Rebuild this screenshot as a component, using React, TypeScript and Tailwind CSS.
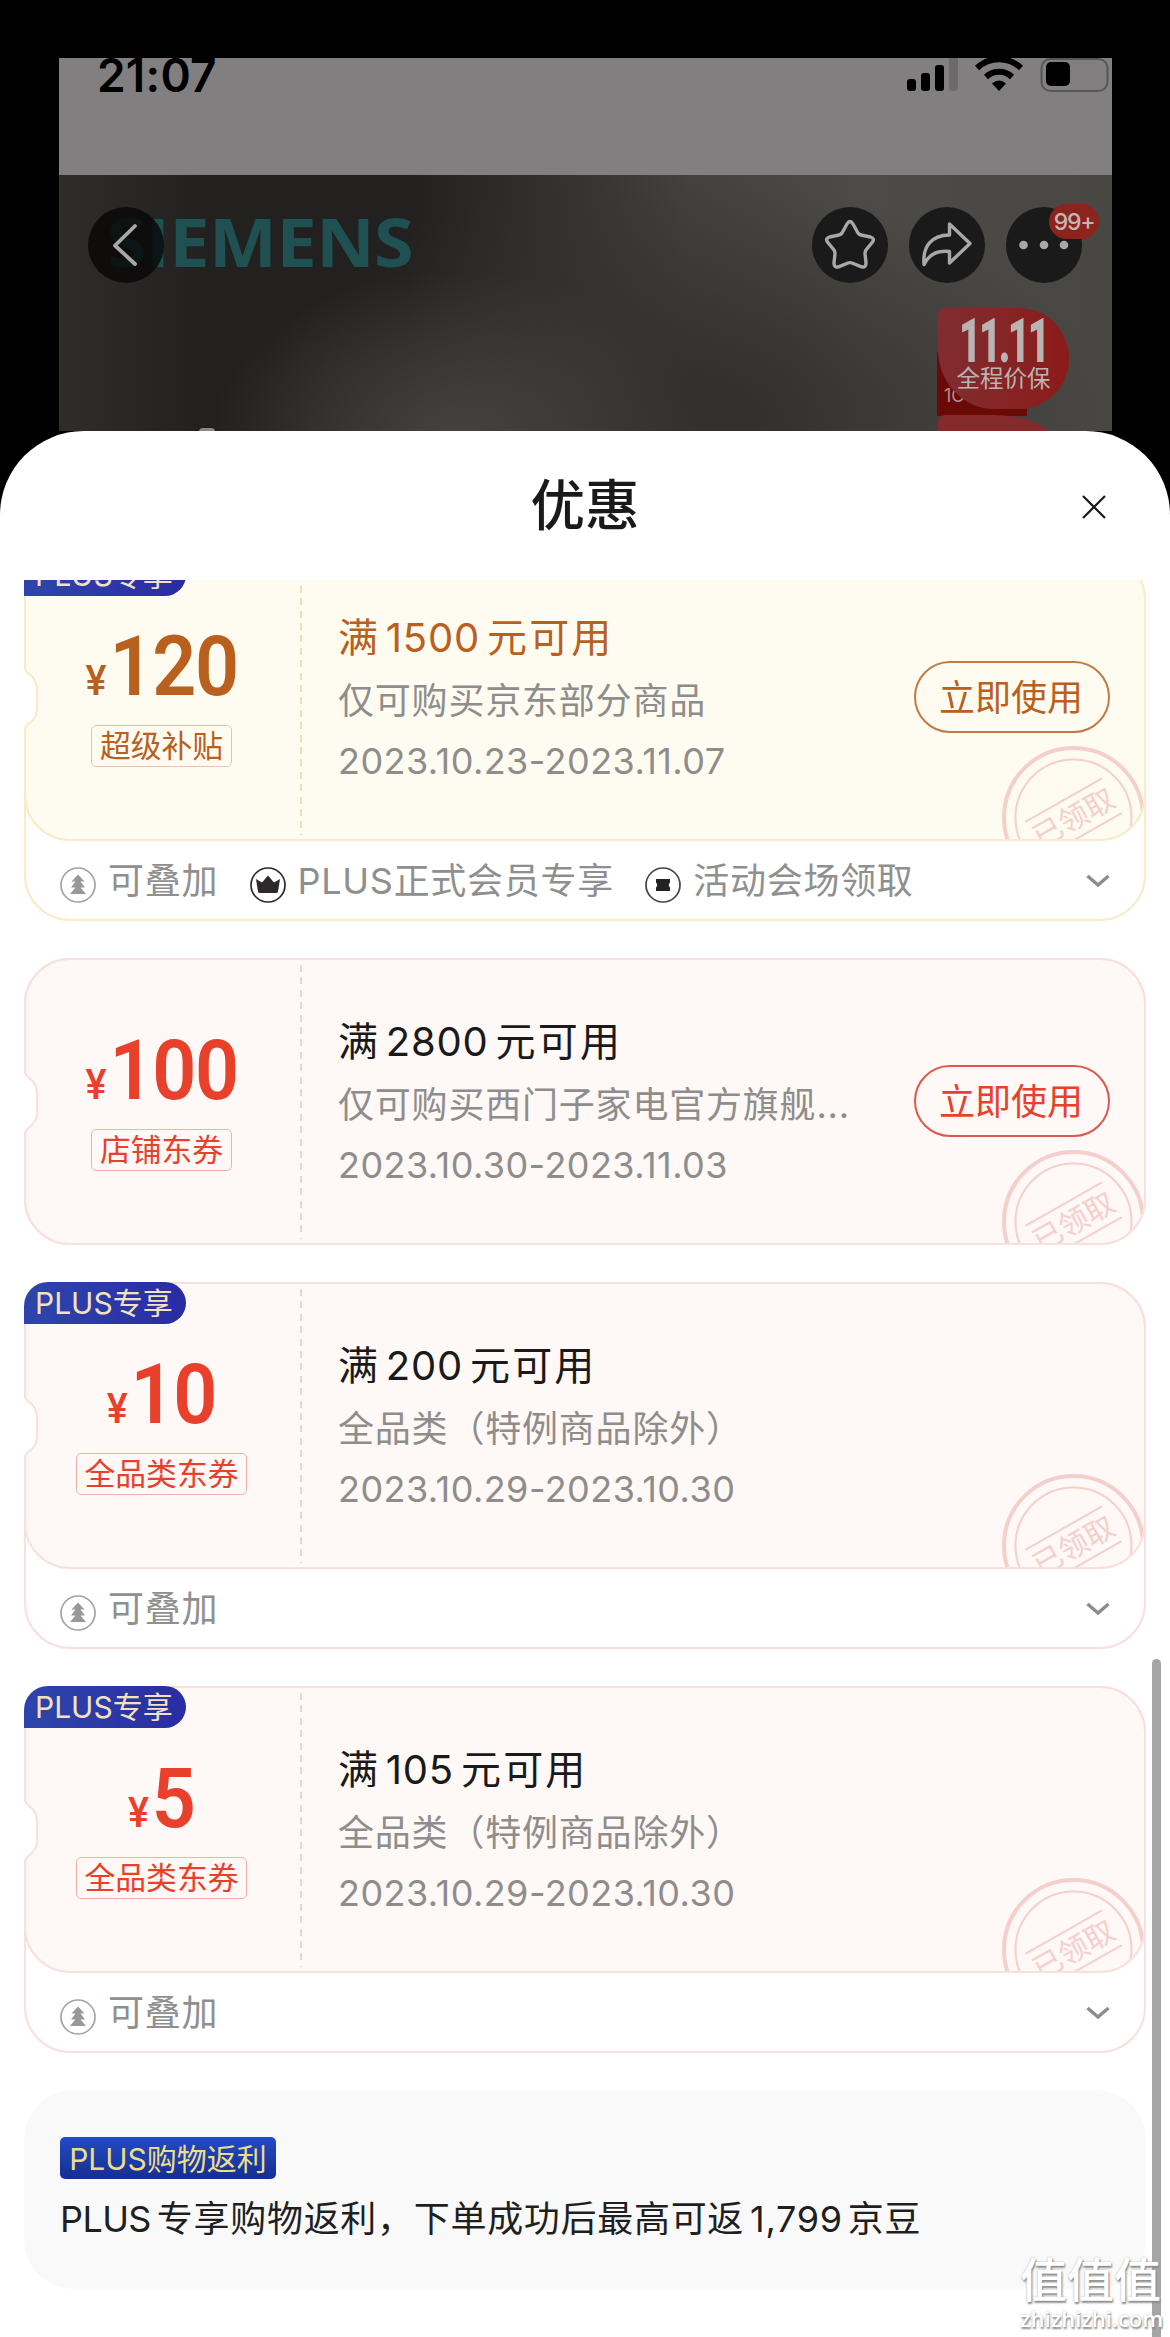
import { FC, ReactNode } from "react";

type Tone = "gold" | "red";

interface Coupon {
  amount: string;
  label: string;
  threshold: string;
  scope: string;
  dates: string;
  tone: Tone;
  plus?: boolean;
  usable?: boolean;
  perks?: { icon: "stack" | "crown" | "ticket"; text: string }[];
}

const coupons: Coupon[] = [
  {
    amount: "120",
    label: "超级补贴",
    threshold: "1500",
    scope: "仅可购买京东部分商品",
    dates: "2023.10.23-2023.11.07",
    tone: "gold",
    plus: true,
    usable: true,
    perks: [
      { icon: "stack", text: "可叠加" },
      { icon: "crown", text: "PLUS正式会员专享" },
      { icon: "ticket", text: "活动会场领取" },
    ],
  },
  {
    amount: "100",
    label: "店铺东券",
    threshold: "2800",
    scope: "仅可购买西门子家电官方旗舰...",
    dates: "2023.10.30-2023.11.03",
    tone: "red",
    usable: true,
  },
  {
    amount: "10",
    label: "全品类东券",
    threshold: "200",
    scope: "全品类（特例商品除外）",
    dates: "2023.10.29-2023.10.30",
    tone: "red",
    plus: true,
    perks: [{ icon: "stack", text: "可叠加" }],
  },
  {
    amount: "5",
    label: "全品类东券",
    threshold: "105",
    scope: "全品类（特例商品除外）",
    dates: "2023.10.29-2023.10.30",
    tone: "red",
    plus: true,
    perks: [{ icon: "stack", text: "可叠加" }],
  },
];

const tones = {
  gold: {
    border: "border-[#f8ebc6]",
    body: "bg-[#fefcf0]",
    text: "text-[#b9601f]",
    title: "text-[#b9601f]",
    tag: "border-[#e6c3a4]",
    button: "border-[#c17a45]",
    dash: "bg-[repeating-linear-gradient(to_bottom,#f0dfae_0_7px,transparent_7px_12.4px)]",
    stroke: "#f8ebc6",
  },
  red: {
    border: "border-[#f9dfdd]",
    body: "bg-[#fef8f6]",
    text: "text-[#e8402b]",
    title: "text-[#1a1a1a]",
    tag: "border-[#f0b0aa]",
    button: "border-[#e0564c]",
    dash: "bg-[repeating-linear-gradient(to_bottom,#f3cfd0_0_7px,transparent_7px_12.4px)]",
    stroke: "#f9dfdd",
  },
};

const StatusBar: FC = () => (
  <div className="flex h-[117px] items-start justify-between overflow-hidden bg-[#827f80] pl-[38px]">
    <div className="mt-[-11px] text-[46px] leading-[56px] font-semibold tracking-[0.2px] text-black">21:07</div>
    <svg width="205" height="36" viewBox="0 0 205 36" className="shrink-0">
      <rect x="0" y="21" width="9" height="12" rx="3" />
      <rect x="14" y="15" width="9" height="18" rx="3" />
      <rect x="28" y="7" width="9" height="26" rx="3" />
      <rect x="42" y="-4" width="9" height="37" rx="3" fill="#6c6a6b" />
      <g fill="none" stroke="#000" strokeWidth="6">
        <path d="M70 10 A32 32 0 0 1 114 10" />
        <path d="M79 19 A19 19 0 0 1 105 19" />
      </g>
      <path d="M85 25.5 Q92 19.5 99 25.5 L92 33 Z" />
      <rect x="134.500" y="1" width="66" height="32" rx="9" fill="none" stroke="#575556" strokeWidth="2" />
      <rect x="139" y="4" width="24" height="24" rx="5" />
    </svg>
  </div>
);

const RoundButton: FC<{ children: ReactNode; className?: string }> = ({ children, className = "" }) => (
  <div className={`relative h-[76px] w-[76px] rounded-full ${className}`}>
    <svg
      width="76"
      height="76"
      viewBox="0 0 76 76"
      fill="none"
      stroke="#a9a8a8"
      strokeWidth="3.4"
      strokeLinejoin="round"
      strokeLinecap="round"
    >
      {children}
    </svg>
  </div>
);

const ProductPhoto: FC = () => (
  <div className="relative h-[256px] overflow-hidden bg-[radial-gradient(ellipse_250px_170px_at_400px_265px,#444340_0%,#44434000_100%),radial-gradient(ellipse_430px_250px_at_620px_250px,#31302e_15%,#31302e00_100%),linear-gradient(to_right,#2e2d2a_0%,#22211f_14%,#22211f_33%,#31302d_46%,#43423e_60%,#4c4b47_76%,#484744_100%)]">
    <div className="absolute top-[21px] left-[48px] origin-left scale-x-[1.09] font-['Open_Sans'] text-[66px] leading-[90px] font-bold tracking-[-0.5px] text-[#1f5152]">
      SIEMENS
    </div>
    <div className="relative flex items-start pt-[32px] pl-[29px]">
      <RoundButton className="bg-[#080606]/80">
        <path d="M47 19 L27 38.500 L47 57" strokeWidth="3.800" />
      </RoundButton>
      <div className="ml-[648px] flex gap-[21px]">
        <RoundButton className="bg-[#1b1a1a]">
          <path d="M35 17 Q38 12 41 17 L46 26 Q47 27.600 49 28 L58.500 30 Q63 31.500 60.500 35 L54 43 Q53 44.500 53 46.500 L54 56 Q54 61 49.500 59.800 L40 56 Q38 55.200 36 56 L26.500 59.800 Q22 61 22 56 L23 46.500 Q23 44.500 22 43 L15.500 35 Q13 31.500 17.500 30 L27 28 Q29 27.600 30 26 Z" />
        </RoundButton>
        <RoundButton className="bg-[#1b1a1a]">
          <path d="M40.500 17 L61 36.500 L40.500 56 L40.500 44.500 C28 43 20 47 15 57.500 C13.500 40 22 28 40.500 28 Z" />
        </RoundButton>
        <RoundButton className="bg-[#1b1a1a]">
          <g fill="#a9a8a8" stroke="none">
            <circle cx="17.500" cy="38" r="4.300" />
            <circle cx="38" cy="38" r="4.300" />
            <circle cx="58" cy="38" r="4.300" />
          </g>
        </RoundButton>
      </div>
    </div>
    <div className="absolute top-[29px] left-[990px] flex h-[35px] w-[50px] items-center justify-center rounded-full bg-[#8c231c] pt-[2px] text-[23px] font-medium tracking-[-1.2px] text-[#c0b6b5]">
      99+
    </div>

    {/* price protection ribbon */}
    <div className="absolute top-[177px] left-[878px] h-[64px] w-[90px] bg-[#690a07] pt-[32px] pl-[7px] text-[18px] leading-[24px] text-[#b08f8d]">
      1C
    </div>
    <div className="absolute top-[240px] left-[879px] h-[30px] w-[115px] rounded-tl-[8px] rounded-tr-[60px_26px] bg-[#85292a]" />
    <div className="absolute top-[133px] left-[879px] flex h-[101px] w-[131px] flex-col items-center rounded-tl-[6px] rounded-tr-[50px] rounded-br-[50px] rounded-bl-[56px_60px] bg-linear-to-r from-[#812c30] to-[#8b1b18] text-[#b9b3b4]">
      <div className="mt-[2px] h-[57px] origin-center scale-x-[0.62] font-[Roboto] text-[62px] leading-[62px] font-black tracking-[-4px]">11.11</div>
      <div className="text-[23.500px] leading-[24px]">全程价保</div>
    </div>
    <div className="absolute top-[253px] left-[140px] h-[8px] w-[16px] rounded-full bg-[#8b8985]" />
  </div>
);

const PerkIcon: FC<{ icon: "stack" | "crown" | "ticket" }> = ({ icon }) => (
  <svg width="36" height="36" viewBox="0 0 36 36" className="relative top-[4px] shrink-0">
    {icon === "stack" && (
      <>
        <circle cx="18" cy="18" r="17" fill="none" stroke="#a3a3a3" strokeWidth="1.700" />
        <path d="M18 7.500 L24.500 14.500 L20.500 14.500 L25 20.500 L20.500 20.500 L26 27 L10 27 L15.500 20.500 L11 20.500 L15.500 14.500 L11.500 14.500 Z" fill="#989898" />
      </>
    )}
    {icon === "crown" && (
      <>
        <circle cx="18" cy="18" r="17" fill="none" stroke="#2b2929" strokeWidth="1.700" />
        <path d="M6 12 L12 15.500 L18 8.500 L24 15.500 L30 12 L28 24.500 Q27.700 26 26 26 L10 26 Q8.300 26 8 24.500 Z" fill="#2b2929" />
      </>
    )}
    {icon === "ticket" && (
      <>
        <circle cx="18" cy="18" r="17" fill="none" stroke="#444" strokeWidth="1.700" />
        <path d="M11 12 L25 12 L25 15.500 Q22.500 18 25 20.500 L25 24 L11 24 L11 20.500 Q13.500 18 11 15.500 Z" fill="#222" />
      </>
    )}
  </svg>
);

const Stamp: FC = () => (
  <svg width="143" height="143" viewBox="0 0 143 143" className="absolute top-[190px] left-[976px]">
    <g fill="none" stroke="#f5cfcc">
      <circle cx="71.500" cy="71.500" r="69.500" strokeWidth="4" />
      <circle cx="71.500" cy="71.500" r="58" strokeWidth="2" />
    </g>
    <g transform="rotate(-29.5 71.5 71.5)">
      <path d="M27.500 51.500 H115.500 M27.500 91.500 H115.500" stroke="#f5cfcc" strokeWidth="2" />
      <text x="71.500" y="82.500" textAnchor="middle" fontSize="29.500" fill="#f5cfcc">已领取</text>
    </g>
  </svg>
);

const CouponCard: FC<{ coupon: Coupon }> = ({ coupon }) => {
  const t = tones[coupon.tone];
  return (
    <div className={`relative rounded-[46px] border-2 bg-white ${t.border}`}>
      <div className={`relative -m-[2px] flex h-[287.5px] overflow-hidden rounded-[46px] border-2 ${t.border} ${t.body}`}>
        <div className={`flex w-[274px] shrink-0 flex-col items-center pt-[69px] pr-[3px] ${t.text}`}>
          <div className="flex h-[83px] scale-x-[0.92] items-baseline font-[Roboto] leading-[83px]">
            <span className="text-[43px] font-medium">¥</span>
            <span className="ml-[3px] text-[84px] font-semibold tracking-[-1.5px]">{coupon.amount}</span>
          </div>
          <div className={`mt-[17px] flex h-[42px] items-center rounded-[5px] border-[1.5px] px-[8px] pt-[2px] text-[30.8px] leading-none ${t.tag}`}>
            {coupon.label}
          </div>
        </div>
        <div className={`mt-[5px] mb-[4px] w-[2px] ${t.dash}`} />
        <div className="flex-1 pt-[57px] pl-[36px]">
          <div className={`text-[40px] leading-[49px] tracking-[2.2px] ${t.title}`}>
            满<span className="mr-[7px] ml-[5.5px] tracking-[0.8px]">{coupon.threshold}</span>元可用
          </div>
          <div className="mt-[9px] text-[36px] leading-[60px] tracking-[0.8px] text-[#8f8d8c]">{coupon.scope}</div>
          <div className="text-[36px] leading-[61px] tracking-[0.45px] text-[#8f8d8c]">{coupon.dates}</div>
        </div>
        {coupon.usable && (
          <div className="mr-[34px] flex items-center">
            <button className={`h-[72px] w-[196px] rounded-full border-2 pt-[2px] pr-[2px] text-[36px] leading-none ${t.text} ${t.button}`}>
              立即使用
            </button>
          </div>
        )}
        <Stamp />
      </div>

      {/* ticket notch on the left edge */}
      <svg width="16" height="62" viewBox="0 0 16 62" className="absolute top-[112px] left-[-3px]">
        <path d="M0 2 L2 2 Q3 4 9 8.500 Q14 14 14 22 V40 Q14 48 9 53 Q3 57 2 60 L0 60 Z" fill="#fff" />
        <path d="M2 1 Q3 4 9 8.500 Q14 14 14 22 V40 Q14 48 9 53 Q3 57 2 61" fill="none" stroke={t.stroke} strokeWidth="2" />
      </svg>

      {coupon.plus && (
        <div className="absolute -top-[2px] -left-[2px] flex h-[42px] w-[162px] items-center rounded-tl-[24px] rounded-r-[21px] bg-linear-to-r from-[#2d45ab] to-[#2a2ca2] pt-[1px] pl-[11px] text-[30px] leading-none text-[#f3e2bf]">
          PLUS专享
        </div>
      )}

      {coupon.perks && (
        <div className="flex h-[80px] items-center pt-[4px] pr-[34px] pl-[34px]">
          {coupon.perks.map((perk) => (
            <div key={perk.text} className="mr-[31.5px] flex items-center gap-[12px]">
              <PerkIcon icon={perk.icon} />
              <span className="text-[36px] leading-[44px] tracking-[0.7px] text-[#8f8f8f]">{perk.text}</span>
            </div>
          ))}
          <svg width="24" height="14" viewBox="0 0 24 14" className="ml-auto">
            <path d="M1.500 2 L12 11 L22.500 2" fill="none" stroke="#8d8d8d" strokeWidth="3.400" />
          </svg>
        </div>
      )}
    </div>
  );
};

export default function App() {
  return (
    <div className="relative h-[2337px] w-[1170px] overflow-hidden bg-black font-[Inter,'Noto_Sans_CJK_SC',sans-serif]">
      <div className="mr-[58px] ml-[59px] pt-[58px]">
        <StatusBar />
        <ProductPhoto />
      </div>

      <div className="h-[1906px] rounded-t-[84px] bg-white">
        <div className="flex h-[149px] items-center justify-between px-[64px]">
          <div className="w-6" />
          <h1 className="text-[54.5px] leading-none font-medium text-[#1a1a1a]">优惠</h1>
          <svg width="24" height="24" viewBox="0 0 24 24" stroke="#1a1a1a" strokeWidth="2.200" className="relative top-[1px]">
            <path d="M1 1 L23 23 M23 1 L1 23" />
          </svg>
        </div>

        <div className="h-[1757px] overflow-hidden px-[24px]">
          <div className="-mt-[26.5px] flex flex-col gap-[36.5px]">
            {coupons.map((coupon) => (
              <CouponCard key={coupon.amount} coupon={coupon} />
            ))}
            <div className="h-[199px] rounded-[50px] bg-[#f9f9f9] pt-[47px] pl-[36px]">
              <div className="flex h-[42px] w-[216px] items-center justify-center rounded-[5px] bg-linear-to-b from-[#234bc6] to-[#152f90] pt-[2px] text-[30px] leading-none text-[#ecdc8c]">
                PLUS购物返利
              </div>
              <div className="mt-[16px] text-[36px] leading-[48px] tracking-[0.7px] text-[#1f1f1f]">
                <span className="tracking-[-0.6px]">PLUS</span>
                <span className="ml-[6px]">专享购物返利，下单成功后最高可返</span>
                <span className="mr-[5px] ml-[6px]">1,799</span>京豆
              </div>
            </div>
          </div>
        </div>
      </div>

      {/* scroll thumb */}
      <div className="absolute top-[1659px] left-[1152px] h-[700px] w-[9px] rounded-full bg-[#a5a5a5]" />

      <div className="absolute top-[2254px] left-[1020px] text-white [text-shadow:1px_2px_2px_#8a8a8a,0_0_2px_#b5b5b5]">
        <div className="text-[47px] leading-[52px] font-medium">值值值</div>
        <div className="font-['Open_Sans'] text-[22px] leading-[24px] font-semibold">zhizhizhi.com</div>
      </div>
    </div>
  );
}
